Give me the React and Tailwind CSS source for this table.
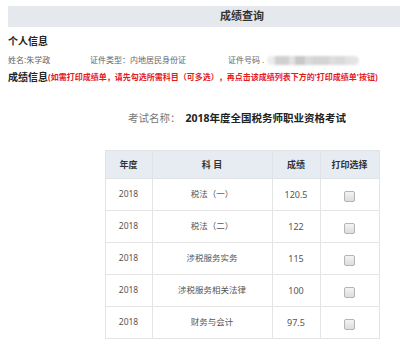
import React from "react";

const rows = [
  ["2018", "税法（一）", "120.5"],
  ["2018", "税法（二）", "122"],
  ["2018", "涉税服务实务", "115"],
  ["2018", "涉税服务相关法律", "100"],
  ["2018", "财务与会计", "97.5"],
];

const font = { fontFamily: '"Noto Sans", "Noto Sans CJK SC", sans-serif' };

function Box() {
  return (
    <span className="inline-block w-[11px] h-[11px] rounded-[2px] border border-[#b4b4b4] bg-gradient-to-b from-[#f4f4f4] to-[#dcdcdc] align-middle" />
  );
}

export default function App() {
  return (
    <div className="w-[400px] h-[344px] overflow-hidden bg-white" style={font}>
      <div className="w-[484px] px-2 pt-[6px]">
        <div className="h-[21px] bg-[#e5e9ee] flex items-center justify-center text-[11px] font-bold text-[#333]">
          成绩查询
        </div>
        <div className="mt-[7px] h-[14px] flex items-center text-[10px] font-bold text-[#222]">
          个人信息
        </div>
        <div className="mt-[6px] h-[12px] flex items-center text-[8px] text-[#666]">
          <span className="w-[82px]">姓名:朱学政</span>
          <span className="w-[138px]">证件类型：内地居民身份证</span>
          <span className="flex items-center">
            证件号码
            <span className="ml-[2px]">.</span>
            <span className="ml-[3px] w-[92px] h-[9px] rounded-full blur-[1px] bg-gradient-to-r from-[#eee] via-[#d8d8d8] to-[#e6e6e6] flex">
              <span className="w-[14px] ml-[8px] bg-[#d0d0d0]" />
              <span className="w-[10px] ml-[6px] bg-[#c8c8c8]" />
              <span className="w-[16px] ml-[8px] bg-[#d4d4d4]" />
              <span className="w-[10px] ml-[6px] bg-[#dadada]" />
            </span>
          </span>
        </div>
        <div className="mt-[4px] h-[14px] flex items-center whitespace-nowrap">
          <span className="text-[10px] font-bold text-[#222]">成绩信息</span>
          <span className="text-[8px] font-bold text-[#e41b1b]">
            (如需打印成绩单，请先勾选所需科目（可多选），再点击该成绩列表下方的'打印成绩单'按钮)
          </span>
        </div>
        <div className="mt-[27px] h-[16px] flex items-center justify-center pr-[10px] text-[10.5px]">
          <span className="text-[#777]">考试名称：</span>
          <span className="ml-[5px] font-bold text-[#222]">2018年度全国税务师职业资格考试</span>
        </div>
        <div className="mt-[23px] flex justify-center">
          <table className="border-collapse text-center">
            <thead>
              <tr className="h-[28px] bg-[#e7ecf2] text-[9px] font-bold text-[#333]">
                <th className="w-[47px] border border-[#e0e3e6]">年度</th>
                <th className="w-[120px] border border-[#e0e3e6]">科 目</th>
                <th className="w-[48px] border border-[#e0e3e6]">成绩</th>
                <th className="w-[59px] border border-[#e0e3e6]">打印选择</th>
              </tr>
            </thead>
            <tbody>
              {rows.map((r, i) => (
                <tr key={i} className="h-[32px] text-[8.5px] text-[#555]">
                  <td className="border border-[#e4e4e4]">{r[0]}</td>
                  <td className="border border-[#e4e4e4]">{r[1]}</td>
                  <td className="border border-[#e4e4e4] text-[9px]">{r[2]}</td>
                  <td className="border border-[#e4e4e4] pt-[3px]">
                    <Box />
                  </td>
                </tr>
              ))}
            </tbody>
          </table>
        </div>
      </div>
    </div>
  );
}
